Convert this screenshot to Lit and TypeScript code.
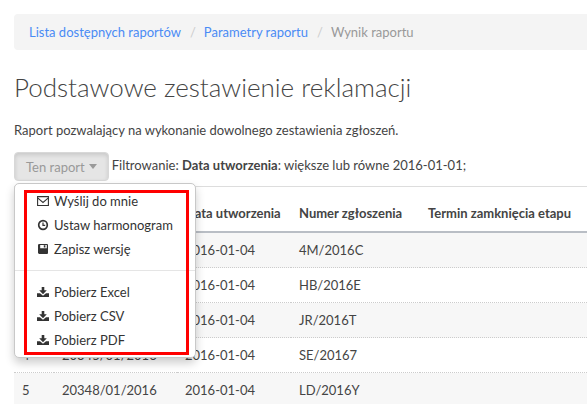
import { LitElement, html, css, svg } from "lit";
import { customElement, state } from "lit/decorators.js";

type IconName = "mail" | "clock" | "save" | "download";

const icons = {
  mail: svg`<path fill="none" stroke="currentColor" stroke-width="1.1" d="M.6 1.600h10.800v8.900H.6z"/><path fill="none" stroke="currentColor" stroke-width="1.1" d="M.9 3.200 6 7.500l5.100-4.300"/>`,
  clock: svg`<circle cx="6" cy="6" r="4.300" fill="none" stroke="currentColor" stroke-width="1.700"/><path fill="none" stroke="currentColor" stroke-width="1.200" d="M6 3.500v2.900h2.200"/>`,
  save: svg`<path fill="currentColor" fill-rule="evenodd" d="M1 2.200Q1 1 2.200 1H10q1 0 1 1v8q0 1-1 1H2l-1-1zM3.200 2v3.200h6.600V2zM6.800 2.300h1.600v2.200H6.800z"/>`,
  download: svg`<path fill="currentColor" d="M4.700 1h2.600v3.300h2.500L6 8.200 2.200 4.300h2.500z"/><path fill="currentColor" d="M0 7.300h3L6 9.800l3-2.500h3V11H0z"/>`,
};

interface Action {
  icon: IconName;
  label: string;
}

const actionGroups: Action[][] = [
  [
    { icon: "mail", label: "Wyślij do mnie" },
    { icon: "clock", label: "Ustaw harmonogram" },
    { icon: "save", label: "Zapisz wersję" },
  ],
  [
    { icon: "download", label: "Pobierz Excel" },
    { icon: "download", label: "Pobierz CSV" },
    { icon: "download", label: "Pobierz PDF" },
  ],
];

@customElement("report-menu")
export class ReportMenu extends LitElement {
  @state() private open = true;

  static styles = css`
    :host {
      display: inline-block;
      position: relative;
    }
    button {
      font: inherit;
      color: inherit;
      cursor: pointer;
    }
    .toggle {
      display: flex;
      align-items: center;
      gap: 4px;
      height: 29px;
      padding: 0 11px;
      border: 1px solid #d8d8d8;
      border-radius: 4px;
      background: #e5e5e5;
      box-shadow: inset 0 2px 4px rgba(0, 0, 0, 0.13);
      color: #999;
    }
    .caret {
      border: 4px solid transparent;
      border-top: 5px solid #999;
      border-bottom: 0;
    }
    .menu {
      position: absolute;
      z-index: 1;
      top: 100%;
      left: 0;
      box-sizing: border-box;
      width: 182px;
      margin-top: 2px;
      padding: 5px 0;
      border: 1px solid #c8c8c8;
      border-radius: 5px;
      background: #fff;
      box-shadow: 0 5px 10px rgba(0, 0, 0, 0.2);
    }
    .item {
      display: flex;
      align-items: center;
      gap: 5px;
      width: 100%;
      height: 24px;
      padding: 0 22px;
      border: 0;
      background: none;
      color: #333;
      white-space: nowrap;
    }
    .icon {
      flex: none;
      width: 12px;
      height: 12px;
    }
    .divider {
      height: 1px;
      margin: 9px 0;
      border: 0;
      background: #e5e5e5;
    }
    .highlight {
      position: absolute;
      inset: 6px 6px 2px 9px;
      border: 3px solid #f00;
      pointer-events: none;
    }
  `;

  private renderItem(action: Action) {
    return html`<button class="item" role="menuitem">
      <svg class="icon" viewBox="0 0 12 12" aria-hidden="true">${icons[action.icon]}</svg>
      <span>${action.label}</span>
    </button>`;
  }

  render() {
    return html`
      <button
        class="toggle"
        aria-haspopup="menu"
        aria-expanded=${this.open}
        @click=${() => (this.open = !this.open)}
      >
        Ten raport<span class="caret"></span>
      </button>
      ${this.open
        ? html`<div class="menu" role="menu">
            ${actionGroups.map(
              (group, i) => html`
                ${i > 0 ? html`<hr class="divider" />` : null}
                ${group.map((action) => this.renderItem(action))}
              `
            )}
            <div class="highlight"></div>
          </div>`
        : null}
    `;
  }
}

const rows = [
  ["1", "20342/01/2016", "2016-01-04", "4M/2016C", ""],
  ["2", "20343/01/2016", "2016-01-04", "HB/2016E", ""],
  ["3", "20344/01/2016", "2016-01-04", "JR/2016T", ""],
  ["4", "20345/01/2016", "2016-01-04", "SE/20167", ""],
  ["5", "20348/01/2016", "2016-01-04", "LD/2016Y", ""],
];

@customElement("app-root")
export class AppRoot extends LitElement {
  static styles = css`
    :host {
      display: block;
      padding: 14px 0 0 14px;
      overflow: hidden;
      background: #fff;
      color: #444;
      font: 13px/20px Lato, "Open Sans", sans-serif;
    }
    .breadcrumb {
      display: flex;
      margin: 0;
      padding: 8px 15px;
      border-radius: 4px 0 0 4px;
      background: #f4f4f4;
      color: #999;
      list-style: none;
    }
    .breadcrumb li + li::before {
      content: "/";
      padding: 0 8px 0 9px;
      color: #ccc;
    }
    .breadcrumb a {
      color: #4a8bf5;
      text-decoration: none;
    }
    h1 {
      margin: 20px 0 16px;
      font-size: 26px;
      font-weight: 300;
      line-height: 34px;
    }
    p {
      margin: 0;
    }
    .toolbar {
      display: flex;
      align-items: center;
      gap: 3px;
      margin: 12px 0 5px;
    }
    .filter {
      padding-bottom: 3px;
    }
    table {
      width: 100%;
      border-collapse: separate;
      border-spacing: 0;
      table-layout: fixed;
      border-top: 1px solid #ddd;
    }
    th,
    td {
      box-sizing: border-box;
      padding: 7px 8px;
      text-align: left;
      white-space: nowrap;
    }
    th {
      height: 46px;
      padding: 16px 8px 8px;
      border-bottom: 2px solid #b9bec5;
      font-weight: 700;
    }
    td {
      height: 35px;
      border-bottom: 1px dotted #ccc;
    }
    tbody tr:nth-child(odd) {
      background: #f7f7f7;
    }
    .col-index {
      width: 40px;
    }
    .col-report {
      width: 123px;
    }
    .col-date {
      width: 114px;
    }
    .col-number {
      width: 129px;
    }
  `;

  render() {
    return html`
      <nav aria-label="Ścieżka">
        <ol class="breadcrumb">
          <li><a href="#lista">Lista dostępnych raportów</a></li>
          <li><a href="#parametry">Parametry raportu</a></li>
          <li aria-current="page">Wynik raportu</li>
        </ol>
      </nav>
      <h1>Podstawowe zestawienie reklamacji</h1>
      <p>Raport pozwalający na wykonanie dowolnego zestawienia zgłoszeń.</p>
      <div class="toolbar">
        <report-menu></report-menu>
        <span class="filter">Filtrowanie: <b>Data utworzenia</b>: większe lub równe 2016-01-01;</span>
      </div>
      <table>
        <colgroup>
          <col class="col-index" />
          <col class="col-report" />
          <col class="col-date" />
          <col class="col-number" />
          <col />
        </colgroup>
        <thead>
          <tr>
            <th scope="col">#</th>
            <th scope="col">Numer</th>
            <th scope="col">Data utworzenia</th>
            <th scope="col">Numer zgłoszenia</th>
            <th scope="col">Termin zamknięcia etapu</th>
          </tr>
        </thead>
        <tbody>
          ${rows.map((row) => html`<tr>${row.map((cell) => html`<td>${cell}</td>`)}</tr>`)}
        </tbody>
      </table>
    `;
  }
}
